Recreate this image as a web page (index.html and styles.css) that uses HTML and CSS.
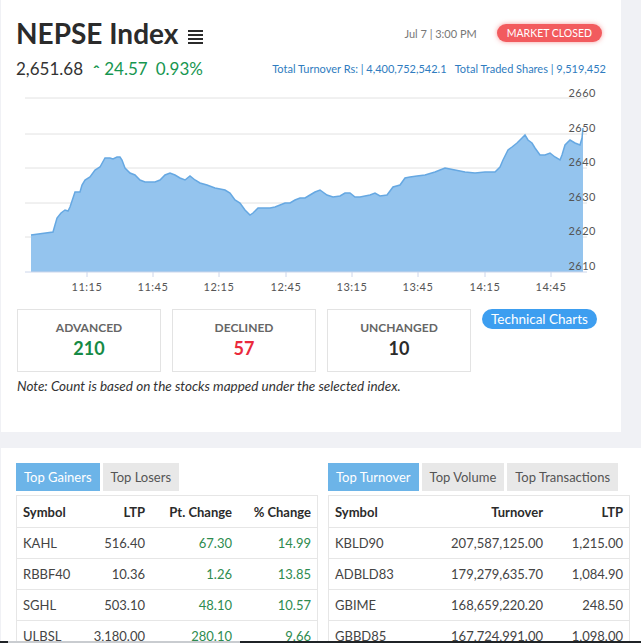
FILE: index.html
```html
<!DOCTYPE html>
<html lang="en">
<head>
    <meta charset="UTF-8">
    <meta name="viewport" content="width=device-width, initial-scale=1.0">
    <title>NEPSE Index</title>
    <link rel="stylesheet" href="styles.css">
</head>
<body>
    <section class="index-card">
        <div class="index-head">
            <h1 class="index-title">NEPSE Index
                <svg class="menu-glyph" width="15" height="14" viewBox="0 0 15 14">
                    <rect x="0" y="0" width="15" height="2"/>
                    <rect x="0" y="4" width="15" height="2"/>
                    <rect x="0" y="8" width="15" height="2"/>
                    <rect x="0" y="12" width="15" height="2"/>
                </svg>
            </h1>
            <div class="market-status">
                <span class="market-time">Jul 7 | 3:00 PM</span>
                <span class="market-badge">MARKET CLOSED</span>
            </div>
        </div>
        <div class="index-sub">
            <div class="index-value">
                <span class="value">2,651.68</span>
                <span class="change"><span class="caret">&#710;</span> 24.57</span>
                <span class="change">0.93%</span>
            </div>
            <div class="turnover">Total Turnover Rs: | 4,400,752,542.1&nbsp;&nbsp; Total Traded Shares | 9,519,452</div>
        </div>

        <svg class="index-chart" width="590" height="210" viewBox="16 86 590 210">
            <g class="grid">
                <line x1="25" y1="98" x2="587" y2="98"/>
                <line x1="25" y1="134" x2="587" y2="134"/>
                <line x1="25" y1="168" x2="587" y2="168"/>
                <line x1="25" y1="203" x2="587" y2="203"/>
                <line x1="25" y1="237" x2="587" y2="237"/>
            </g>
            <polygon class="area" points="31,272 31,235 53,232 55,225 57,218 61,213 65,210 68,211 70,207 75,192 80,192 82,185 85,180 90,177 95,170 100,167 105,158 110,158 113,159 117,157 120,157 122,160 125,168 130,173 135,175 140,180 145,182 150,182 155,182 160,180 165,175 170,173 175,175 180,178 185,180 190,176 195,180 200,183 207,185 215,188 225,190 230,193 235,200 240,203 245,210 250,215 253,213 258,208 265,208 270,208 275,207 280,205 285,203 290,203 295,200 300,198 305,198 310,195 315,192 320,190 327,195 333,197 340,196 345,193 350,193 355,197 360,197 365,196 370,195 375,193 380,196 387,195 393,187 400,185 405,178 410,177 417,176 425,175 435,172 440,170 445,168 450,169 455,170 465,172 475,173 485,172 495,172 500,167 503,160 508,150 512,147 517,143 522,138 525,135 528,140 532,143 535,148 540,155 545,155 550,153 555,157 560,160 562,155 565,145 570,140 575,143 580,145 582,138 583,128 583,272"/>
            <polyline class="line" points="31,235 53,232 55,225 57,218 61,213 65,210 68,211 70,207 75,192 80,192 82,185 85,180 90,177 95,170 100,167 105,158 110,158 113,159 117,157 120,157 122,160 125,168 130,173 135,175 140,180 145,182 150,182 155,182 160,180 165,175 170,173 175,175 180,178 185,180 190,176 195,180 200,183 207,185 215,188 225,190 230,193 235,200 240,203 245,210 250,215 253,213 258,208 265,208 270,208 275,207 280,205 285,203 290,203 295,200 300,198 305,198 310,195 315,192 320,190 327,195 333,197 340,196 345,193 350,193 355,197 360,197 365,196 370,195 375,193 380,196 387,195 393,187 400,185 405,178 410,177 417,176 425,175 435,172 440,170 445,168 450,169 455,170 465,172 475,173 485,172 495,172 500,167 503,160 508,150 512,147 517,143 522,138 525,135 528,140 532,143 535,148 540,155 545,155 550,153 555,157 560,160 562,155 565,145 570,140 575,143 580,145 582,138 583,128"/>
            <g class="axis">
                <line x1="25" y1="272" x2="587" y2="272"/>
                <line x1="87" y1="272" x2="87" y2="277"/>
                <line x1="153" y1="272" x2="153" y2="277"/>
                <line x1="219" y1="272" x2="219" y2="277"/>
                <line x1="286" y1="272" x2="286" y2="277"/>
                <line x1="352" y1="272" x2="352" y2="277"/>
                <line x1="418" y1="272" x2="418" y2="277"/>
                <line x1="485" y1="272" x2="485" y2="277"/>
                <line x1="551" y1="272" x2="551" y2="277"/>
            </g>
            <g class="y-labels">
                <text x="596" y="97">2660</text>
                <text x="596" y="132">2650</text>
                <text x="596" y="166">2640</text>
                <text x="596" y="201">2630</text>
                <text x="596" y="235">2620</text>
                <text x="596" y="270">2610</text>
            </g>
            <g class="x-labels">
                <text x="87" y="291">11:15</text>
                <text x="153" y="291">11:45</text>
                <text x="219" y="291">12:15</text>
                <text x="286" y="291">12:45</text>
                <text x="352" y="291">13:15</text>
                <text x="418" y="291">13:45</text>
                <text x="485" y="291">14:15</text>
                <text x="551" y="291">14:45</text>
            </g>
        </svg>

        <div class="breadth">
            <div class="breadth-box">
                <div class="breadth-label">ADVANCED</div>
                <div class="breadth-num up">210</div>
            </div>
            <div class="breadth-box">
                <div class="breadth-label">DECLINED</div>
                <div class="breadth-num down">57</div>
            </div>
            <div class="breadth-box">
                <div class="breadth-label">UNCHANGED</div>
                <div class="breadth-num">10</div>
            </div>
            <a class="tech-btn" href="#">Technical Charts</a>
        </div>
        <p class="note">Note: Count is based on the stocks mapped under the selected index.</p>
    </section>

    <section class="movers-card">
        <div class="movers-col">
            <div class="tabs">
                <span class="tab active">Top Gainers</span>
                <span class="tab">Top Losers</span>
            </div>
            <table class="movers gainers">
                <thead>
                    <tr><th class="left">Symbol</th><th>LTP</th><th>Pt. Change</th><th>% Change</th></tr>
                </thead>
                <tbody>
                    <tr><td class="left">KAHL</td><td>516.40</td><td class="up">67.30</td><td class="up">14.99</td></tr>
                    <tr><td class="left">RBBF40</td><td>10.36</td><td class="up">1.26</td><td class="up">13.85</td></tr>
                    <tr><td class="left">SGHL</td><td>503.10</td><td class="up">48.10</td><td class="up">10.57</td></tr>
                    <tr><td class="left">ULBSL</td><td>3,180.00</td><td class="up">280.10</td><td class="up">9.66</td></tr>
                </tbody>
            </table>
        </div>
        <div class="movers-col">
            <div class="tabs">
                <span class="tab active">Top Turnover</span>
                <span class="tab">Top Volume</span>
                <span class="tab">Top Transactions</span>
            </div>
            <table class="movers turnover-table">
                <thead>
                    <tr><th class="left">Symbol</th><th>Turnover</th><th>LTP</th></tr>
                </thead>
                <tbody>
                    <tr><td class="left">KBLD90</td><td>207,587,125.00</td><td>1,215.00</td></tr>
                    <tr><td class="left">ADBLD83</td><td>179,279,635.70</td><td>1,084.90</td></tr>
                    <tr><td class="left">GBIME</td><td>168,659,220.20</td><td>248.50</td></tr>
                    <tr><td class="left">GBBD85</td><td>167,724,991.00</td><td>1,098.00</td></tr>
                </tbody>
            </table>
        </div>
    </section>

    <div class="bottom-strip"><span></span></div>
</body>
</html>
```

FILE: styles.css
```css
body {
    font-family: Lato, 'Noto Sans', sans-serif;
    background-color: #f0f1f5;
    color: #333;
    margin: 0;
    padding: 0;
}
.index-card {
    background-color: #fff;
    width: 620px;
    margin-left: 1px;
    box-sizing: border-box;
    padding: 16px 15px 0 15px;
    height: 432px;
}
.index-head {
    display: flex;
    justify-content: space-between;
    align-items: center;
}
.index-title {
    margin: 0;
    font-size: 28px;
    font-weight: 700;
    color: #2b2b2b;
    line-height: 34px;
}
.menu-glyph {
    fill: #2b2b2b;
    margin-left: 3px;
    vertical-align: 0;
}
.market-status {
    display: flex;
    align-items: center;
    gap: 20px;
    padding-right: 4px;
}
.market-time {
    font-size: 11px;
    color: #777;
}
.market-badge {
    background-color: #f25b5e;
    color: #fff;
    font-size: 10.5px;
    border-radius: 10px;
    padding: 3px 10px;
    box-shadow: 0 0 5px rgba(242, 91, 94, 0.6);
}
.index-sub {
    display: flex;
    justify-content: space-between;
    align-items: center;
    margin-top: 8px;
}
.index-value {
    font-size: 17px;
    display: flex;
    gap: 8px;
}
.index-value .value {
    color: #333;
    margin-right: 2px;
}
.index-value .change {
    color: #169650;
}
.caret {
    display: inline-block;
    font-weight: 700;
    transform: translateY(3px);
}
.turnover {
    font-size: 11px;
    color: #2f7cc0;
}
.index-chart {
    display: block;
    margin-top: 7px;
}
.grid line {
    stroke: #e2e2e2;
    stroke-width: 1;
}
.area {
    fill: #94c4ee;
}
.line {
    fill: none;
    stroke: #66a8e2;
    stroke-width: 1.5;
}
.axis line {
    stroke: #ccd6eb;
    stroke-width: 1;
}
.y-labels text {
    font-size: 11px;
    fill: #555;
    text-anchor: end;
    letter-spacing: 0.5px;
}
.x-labels text {
    font-size: 11px;
    fill: #555;
    text-anchor: middle;
    letter-spacing: 0.5px;
}
.breadth {
    display: flex;
    align-items: flex-start;
    gap: 11px;
    margin-top: 13px;
    padding-left: 1px;
}
.breadth-box {
    width: 144px;
    height: 63px;
    box-sizing: border-box;
    border: 1px solid #e3e3e3;
    text-align: center;
    padding-top: 10px;
}
.breadth-label {
    font-size: 12px;
    font-weight: 700;
    color: #666;
}
.breadth-num {
    font-size: 18px;
    font-weight: 700;
    color: #2b2b2b;
    margin-top: 2px;
}
.breadth-num.up {
    color: #168a45;
}
.breadth-num.down {
    color: #ea2a3c;
}
.tech-btn {
    background-color: #3d9ef0;
    color: #fff;
    text-decoration: none;
    font-size: 13.5px;
    border-radius: 11px;
    padding: 2px 9px;
}
.note {
    margin: 6px 0 0 1px;
    font-size: 13.5px;
    font-style: italic;
    color: #333;
}
.movers-card {
    background-color: #fff;
    margin-top: 16px;
    margin-left: 1px;
    padding: 15px 0 0 15px;
    display: flex;
    gap: 10px;
    height: 200px;
}
.movers-col {
    flex: 0 0 302px;
}
.tabs {
    display: flex;
    gap: 3px;
    margin-bottom: 4px;
    white-space: nowrap;
}
.tab {
    background-color: #e8e8e8;
    color: #555;
    font-size: 13px;
    padding: 6px 8px;
}
.tab.active {
    background-color: #6cb4e8;
    color: #fff;
}
table.movers {
    width: 100%;
    border-collapse: collapse;
    border: 1px solid #e6e6e6;
    font-size: 13px;
    table-layout: fixed;
}
table.movers th,
table.movers td {
    text-align: right;
    padding: 0 6px;
    height: 30px;
    border-bottom: 1px solid #e6e6e6;
    white-space: nowrap;
}
table.movers th {
    height: 31px;
    font-weight: 700;
    color: #2b2b2b;
}
.gainers th:nth-child(1) { width: 56px; }
.gainers th:nth-child(2) { width: 54px; }
.gainers th:nth-child(3) { width: 75px; }
.turnover-table th:nth-child(1) { width: 60px; }
.turnover-table th:nth-child(3) { width: 68px; }
table.movers .left {
    text-align: left;
}
table.movers td {
    color: #444;
}
table.movers td.up {
    color: #2e8b4f;
}
.bottom-strip {
    position: fixed;
    left: 0;
    right: 0;
    bottom: 0;
    height: 2px;
    background-color: #1f2326;
}
.bottom-strip span {
    display: block;
    margin-left: 8px;
    width: 232px;
    height: 2px;
    background-color: #c9ccd0;
}
```
